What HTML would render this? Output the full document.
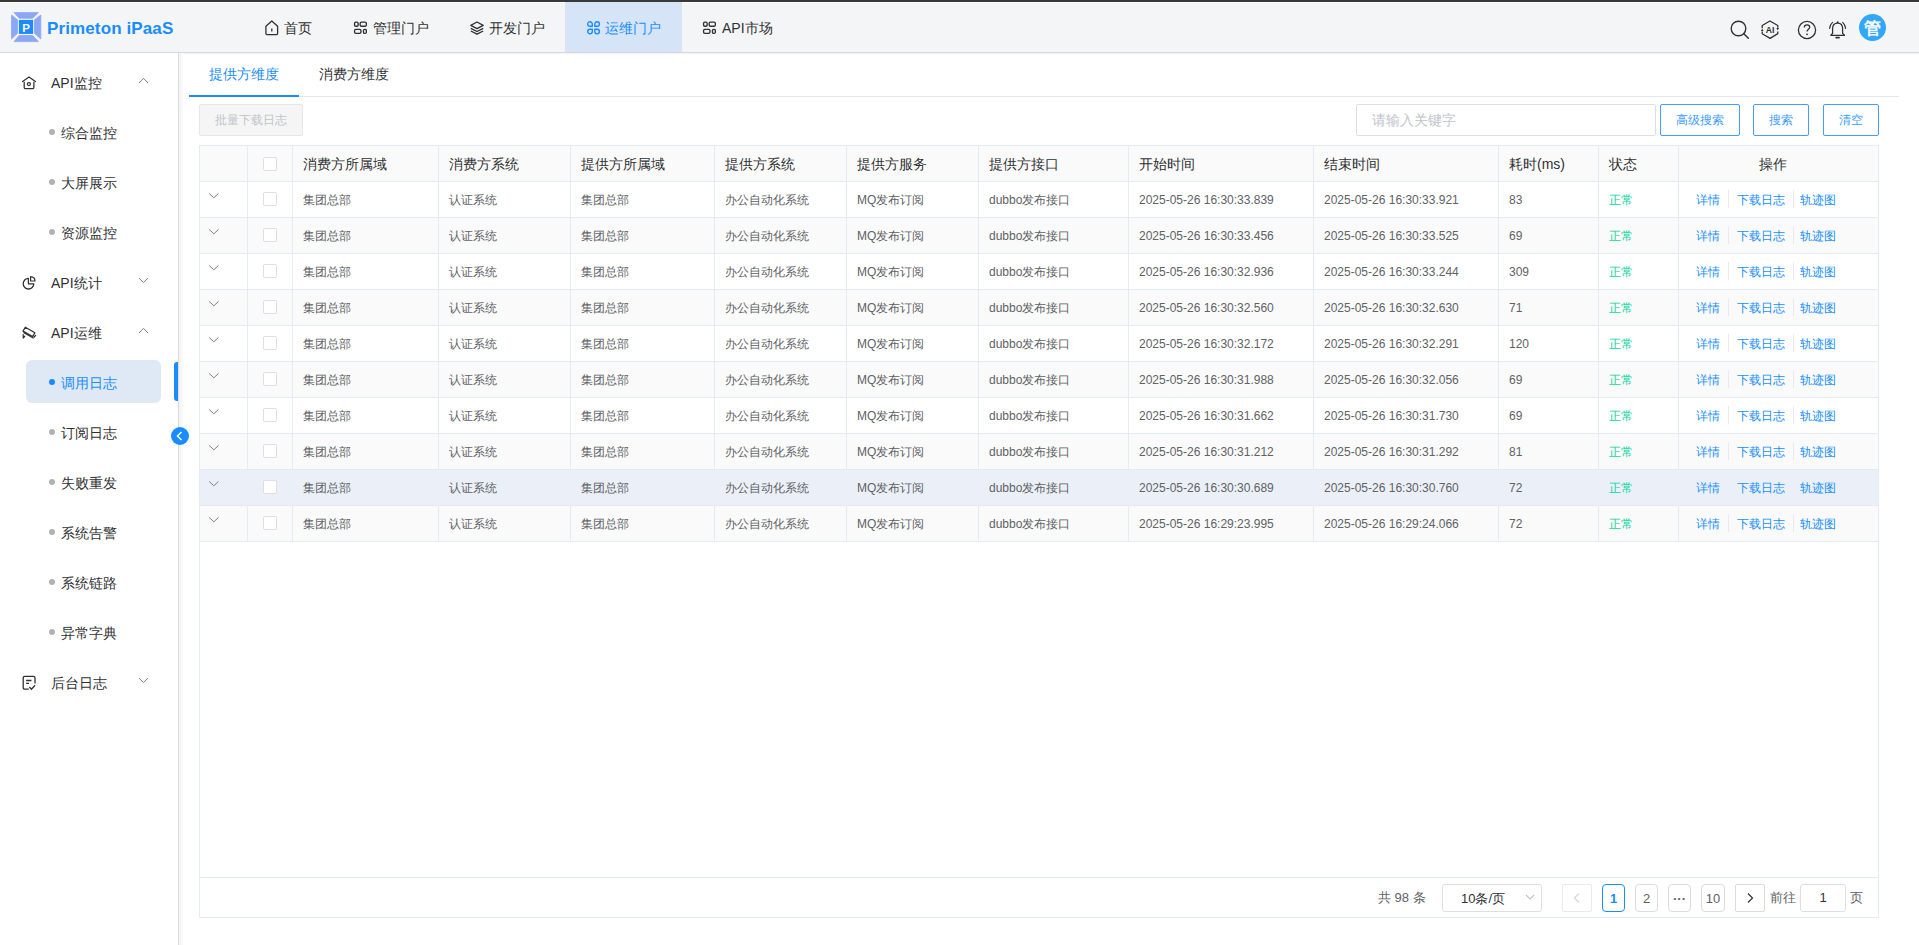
<!DOCTYPE html>
<html><head><meta charset="utf-8"><title>Primeton iPaaS</title>
<style>
*{margin:0;padding:0;box-sizing:border-box}
html,body{width:1919px;height:945px;overflow:hidden;background:#fff;font-family:"Liberation Sans",sans-serif;color:#303133;position:relative}
.a{position:absolute}
.topbar{position:absolute;left:0;top:0;width:1919px;height:2px;background:#393939}
.hdr{position:absolute;left:0;top:2px;width:1919px;height:50px;background:#f4f5f6;border-top:1px solid #fff}
.hdrline{position:absolute;left:0;top:52px;width:1919px;height:1px;background:#d9d9d9}
.hdrsh{position:absolute;left:0;top:53px;width:1919px;height:2px;background:linear-gradient(#eef0f3,#fff)}
.logo-t{position:absolute;left:47px;top:19px;font-size:17px;font-weight:bold;color:#1a8cff;letter-spacing:0.12px;white-space:nowrap}
.nav{position:absolute;top:18px;font-size:14px;color:#303133;white-space:nowrap;line-height:20px}
.navact{position:absolute;left:565px;top:2px;width:117px;height:50px;background:#d5e5f7}
.side{position:absolute;left:0;top:53px;width:178px;height:892px;background:#fff}
.sideline{position:absolute;left:178px;top:53px;width:1px;height:892px;background:#dcdcdc}
.sidesh{position:absolute;left:179px;top:53px;width:5px;height:892px;background:linear-gradient(90deg,#f2f2f2,#fff)}
.mi{position:absolute;left:51px;font-size:14px;color:#303133;white-space:nowrap;line-height:20px}
.si{position:absolute;left:61px;font-size:14px;color:#303133;white-space:nowrap;line-height:20px}
.dot{position:absolute;left:49px;width:6px;height:6px;border-radius:50%;background:#b1b1b1}
.tab{position:absolute;top:64px;font-size:14px;line-height:20px;white-space:nowrap}
.tbl{position:absolute;border:1px solid #e6eaf2}
.hl{position:absolute;left:199px;width:1680px;height:1px;background:#e6eaf2}
.vl{position:absolute;top:145px;width:1px;height:396px;background:#e6eaf2}
.th{position:absolute;top:154px;font-size:14px;line-height:20px;color:#303133;white-space:nowrap}
.td{position:absolute;font-size:12px;line-height:35px;color:#606266;white-space:nowrap}
.ok{color:#0fd3a0}
.lk{color:#1890ff}
.sep{position:absolute;width:1px;height:18px;background:#e8eaec}
.cb{position:absolute;width:14px;height:14px;border:1px solid #dcdfe6;border-radius:2px;background:#fff}
.chev{position:absolute}
.btn{position:absolute;height:32px;border:1px solid #409eff;border-radius:2px;font-size:12px;line-height:30px;text-align:center;color:#409eff;background:#fff;white-space:nowrap}
.pg{position:absolute;top:884px;height:28px;border:1px solid #dcdcdc;border-radius:4px;font-size:13px;line-height:28px;text-align:center;color:#606266;background:#fff}

</style></head><body>
<div class="topbar"></div>
<div class="hdr"></div>
<div class="navact"></div>
<div class="hdrline"></div>
<div class="a" style="left:179px;top:53px;width:1740px;height:2px;background:linear-gradient(#eef1f6,#fff)"></div>
<!-- logo -->
<svg class="a" style="left:11px;top:12px" width="31" height="31" viewBox="0 0 31 31">
 <g fill="#8ba7f6" stroke="#8ba7f6" stroke-width="0.8" stroke-linejoin="round">
 <polygon points="3,0.4 27.4,0.4 21.7,6.2 8.1,6.2"/>
 <polygon points="3,29.6 27.4,29.6 21.7,23.5 8.1,23.5"/>
 <polygon points="0.4,3 0.4,27 6.5,21.3 6.5,7.8"/>
 <polygon points="29.8,3 29.8,27 23.5,21.3 23.5,7.8"/>
 </g>
 <rect x="7.9" y="7.9" width="14.2" height="14" fill="#1a8cff"/>
 <text x="15.2" y="19.6" font-family="Liberation Sans" font-weight="bold" font-size="11.5" fill="#fff" text-anchor="middle">P</text>
</svg>
<div class="logo-t">Primeton iPaaS</div>
<!-- nav -->
<svg class="a" style="left:265px;top:20px" width="14" height="16" viewBox="0 0 14 16"><path d="M0.9 6.3 L6.8 1 L12.6 6.3 V13.6 Q12.6 14.6 11.6 14.6 H1.9 Q0.9 14.6 0.9 13.6 Z M6.8 8.4 V11.4" fill="none" stroke="#303133" stroke-width="1.3" stroke-linejoin="round"/></svg>
<div class="nav" style="left:284px">首页</div>
<svg class="a" style="left:353px;top:21px" width="14" height="14" viewBox="0 0 14 14"><g fill="none" stroke="#303133" stroke-width="1.35"><rect x="1.55" y="1.15" width="3.6" height="4.1" rx="1.3"/><rect x="7.15" y="1.15" width="6.2" height="4.1" rx="1.3"/><rect x="1.55" y="8.35" width="6.4" height="4" rx="1.3"/><rect x="10.45" y="8.35" width="2.9" height="4" rx="1.2"/></g></svg>
<div class="nav" style="left:373px">管理门户</div>
<svg class="a" style="left:470px;top:21px" width="14" height="14" viewBox="0 0 14 14"><g fill="none" stroke="#303133" stroke-width="1.35" stroke-linejoin="round"><path d="M7 1 L13.2 4.3 L7 7.6 L0.8 4.3 Z"/><path d="M0.8 7.3 L7 10.5 L13.2 7.3"/><path d="M0.8 10 L7 13.2 L13.2 10"/></g></svg>
<div class="nav" style="left:489px">开发门户</div>
<svg class="a" style="left:587px;top:21px" width="14" height="14" viewBox="0 0 14 14"><g fill="none" stroke="#1a8cff" stroke-width="1.4" stroke-linejoin="round"><path d="M5.3 3 A2.3 2.3 0 1 0 3 5.3 L5.3 5.3 Z"/><path d="M7.8 3 A2.3 2.3 0 1 1 10.1 5.3 L7.8 5.3 Z"/><path d="M5.3 10.5 A2.3 2.3 0 1 1 3 8.2 L5.3 8.2 Z"/><path d="M7.8 10.5 A2.3 2.3 0 1 0 10.1 8.2 L7.8 8.2 Z"/></g></svg>
<div class="nav" style="left:605px;color:#1a8cff">运维门户</div>
<svg class="a" style="left:702px;top:21px" width="14" height="14" viewBox="0 0 14 14"><g fill="none" stroke="#303133" stroke-width="1.35"><rect x="1.55" y="1.15" width="3.6" height="4.1" rx="1.3"/><rect x="7.15" y="1.15" width="6.2" height="4.1" rx="1.3"/><rect x="1.55" y="8.35" width="6.4" height="4" rx="1.3"/><rect x="10.45" y="8.35" width="2.9" height="4" rx="1.2"/></g></svg>
<div class="nav" style="left:722px">API市场</div>
<!-- right icons -->
<svg class="a" style="left:1730px;top:20px" width="20" height="20" viewBox="0 0 20 20"><circle cx="8.5" cy="8.5" r="7.3" fill="none" stroke="#303133" stroke-width="1.4"/><path d="M13.8 13.8 L18.3 18.3" stroke="#303133" stroke-width="1.5" stroke-linecap="round"/></svg>
<svg class="a" style="left:1756px;top:16px" width="30" height="28" viewBox="0 0 30 28"><g fill="none" stroke="#303133" stroke-width="1.3" stroke-linejoin="round"><path d="M6.2 12.2 V9.5 L13.9 5 L21.8 9.5 V11.8"/><path d="M21.8 15.6 V17.6 L14.1 22.4 L6.2 17.8 V15.6"/></g><path d="M20.3 12 H23.1 L21.7 14.3 Z M4.9 15 H7.6 L6.25 12.8 Z" fill="#303133"/><text x="14" y="16.6" font-family="Liberation Sans" font-weight="bold" font-size="8.6" fill="#303133" text-anchor="middle">AI</text></svg>
<svg class="a" style="left:1797px;top:20px" width="20" height="20" viewBox="0 0 20 20"><circle cx="10" cy="10" r="8.6" fill="none" stroke="#303133" stroke-width="1.3"/><path d="M7.3 7.6 C7.3 5.8 8.5 4.9 10 4.9 C11.6 4.9 12.7 5.9 12.7 7.3 C12.7 9.2 10 9.4 10 11.6" fill="none" stroke="#303133" stroke-width="1.3"/><circle cx="10" cy="14.3" r="0.9" fill="#303133"/></svg>
<svg class="a" style="left:1824px;top:16px" width="28" height="28" viewBox="0 0 28 28"><path d="M6.8 19.3 L8.6 17.4 V12.6 C8.6 9 10.8 7 13.6 7 C16.4 7 18.6 9 18.6 12.6 V17.4 L20.5 19.3 Z" fill="none" stroke="#303133" stroke-width="1.25" stroke-linejoin="round"/><circle cx="13.6" cy="6.3" r="1" fill="#303133"/><path d="M12.2 21.6 H15" stroke="#303133" stroke-width="1.8" stroke-linecap="round"/><path d="M5.6 12.4 C5.9 10 6.9 7.9 8.5 6.4 M21.6 12.4 C21.3 10 20.3 7.9 18.7 6.4" fill="none" stroke="#303133" stroke-width="1.15" stroke-linecap="round"/></svg>
<div class="a" style="left:1859px;top:14px;width:27px;height:27px;border-radius:50%;background:#31a7f9;color:#fff;font-size:17px;font-weight:bold;text-align:center;line-height:29px">管</div>
<!-- sidebar -->
<div class="sideline"></div>
<div class="sidesh"></div>
<svg class="a" style="left:22px;top:76px" width="14" height="14" viewBox="0 0 14 14"><path d="M0.6 5.6 L7 1.1 L13.4 5.6" fill="none" stroke="#303133" stroke-width="1.25" stroke-linejoin="round" stroke-linecap="round"/><path d="M2.2 5.8 V11.6 Q2.2 12.6 3.2 12.6 H10.9 Q11.9 12.6 11.9 11.6 V5.8" fill="none" stroke="#303133" stroke-width="1.25"/><circle cx="6.9" cy="8.1" r="1.55" fill="none" stroke="#303133" stroke-width="1.2"/></svg>
<div class="mi" style="top:73px">API监控</div>
<svg class="a" style="left:138px;top:77px" width="11" height="7" viewBox="0 0 11 7"><path d="M1 6 L5.5 1.3 L10 6" fill="none" stroke="#7d8087" stroke-width="1"/></svg>
<div class="dot" style="top:129px"></div><div class="si" style="top:123px">综合监控</div>
<div class="dot" style="top:179px"></div><div class="si" style="top:173px">大屏展示</div>
<div class="dot" style="top:229px"></div><div class="si" style="top:223px">资源监控</div>
<svg class="a" style="left:22px;top:275px" width="14" height="16" viewBox="0 0 14 16"><path d="M6.4 3.4 A5.3 5.3 0 1 0 11.8 8.8 H6.4 Z" fill="none" stroke="#303133" stroke-width="1.3" stroke-linejoin="round"/><path d="M8.6 1.6 A4.6 4.6 0 0 1 13 6 H8.6 Z" fill="none" stroke="#303133" stroke-width="1.2" stroke-linejoin="round"/></svg>
<div class="mi" style="top:273px">API统计</div>
<svg class="a" style="left:138px;top:277px" width="11" height="7" viewBox="0 0 11 7"><path d="M1 1 L5.5 5.7 L10 1" fill="none" stroke="#7d8087" stroke-width="1"/></svg>
<svg class="a" style="left:22px;top:326px" width="15" height="14" viewBox="0 0 15 14"><g fill="none" stroke="#303133" stroke-width="1.25" stroke-linejoin="round" stroke-linecap="round"><path d="M3.3 1.2 L12.9 6.7 L10.6 10.6 L1 5.1 Z"/><path d="M1.9 6.6 L11.3 12"/><path d="M1.2 8.6 L1.3 12 L2.8 10.2"/><path d="M12.2 11 L13.6 9.3"/></g></svg>
<div class="mi" style="top:323px">API运维</div>
<svg class="a" style="left:138px;top:327px" width="11" height="7" viewBox="0 0 11 7"><path d="M1 6 L5.5 1.3 L10 6" fill="none" stroke="#7d8087" stroke-width="1"/></svg>
<div class="a" style="left:26px;top:360px;width:135px;height:43px;border-radius:6px;background:#dfe9f6"></div>
<div class="a" style="left:174px;top:362px;width:4px;height:39px;border-radius:3px 0 0 3px;background:#1a8cff"></div>
<div class="dot" style="top:379px;background:#1a8cff"></div><div class="si" style="top:373px;color:#1a8cff">调用日志</div>
<div class="dot" style="top:429px"></div><div class="si" style="top:423px">订阅日志</div>
<div class="a" style="left:171px;top:427px;width:18px;height:18px;border-radius:50%;background:#1a8cff"></div>
<svg class="a" style="left:171px;top:427px" width="18" height="18" viewBox="0 0 18 18"><path d="M10.5 5 L6.5 9 L10.5 13" fill="none" stroke="#fff" stroke-width="1.5"/></svg>
<div class="dot" style="top:479px"></div><div class="si" style="top:473px">失败重发</div>
<div class="dot" style="top:529px"></div><div class="si" style="top:523px">系统告警</div>
<div class="dot" style="top:579px"></div><div class="si" style="top:573px">系统链路</div>
<div class="dot" style="top:629px"></div><div class="si" style="top:623px">异常字典</div>
<svg class="a" style="left:22px;top:675px" width="15" height="16" viewBox="0 0 15 16"><path d="M6.8 14.2 H2.8 Q1.2 14.2 1.2 12.6 V3 Q1.2 1.4 2.8 1.4 H11.4 Q13 1.4 13 3 V8.4" fill="none" stroke="#303133" stroke-width="1.3"/><path d="M4.1 5.5 H9.5 M4.1 8.4 H7 M7.4 12 L9.4 14.2 L13.1 10.2" fill="none" stroke="#303133" stroke-width="1.3"/></svg>
<div class="mi" style="top:673px">后台日志</div>
<svg class="a" style="left:138px;top:677px" width="11" height="7" viewBox="0 0 11 7"><path d="M1 1 L5.5 5.7 L10 1" fill="none" stroke="#7d8087" stroke-width="1"/></svg>
<!-- tabs -->
<div class="a" style="left:189px;top:96px;width:1710px;height:1px;background:#e4e7ed"></div>
<div class="a" style="left:189px;top:95px;width:110px;height:2px;background:#1a8cff"></div>
<div class="tab" style="left:209px;color:#1a8cff">提供方维度</div>
<div class="tab" style="left:319px;color:#303133">消费方维度</div>
<!-- toolbar -->
<div class="a" style="left:199px;top:104px;width:104px;height:32px;border:1px solid #e6e6e6;border-radius:2px;background:#f5f5f5;color:#c0c4cc;font-size:12px;line-height:30px;text-align:center">批量下载日志</div>
<div class="a" style="left:1356px;top:104px;width:300px;height:32px;border:1px solid #dcdfe6;border-radius:2px;background:#fff"></div>
<div class="a" style="left:1372px;top:110px;font-size:14px;line-height:20px;color:#c0c4cc">请输入关键字</div>
<div class="btn" style="left:1660px;top:104px;width:80px">高级搜索</div>
<div class="btn" style="left:1753px;top:104px;width:56px">搜索</div>
<div class="btn" style="left:1823px;top:104px;width:56px">清空</div>

<div class="tbl" style="left:199px;top:145px;width:1680px;height:773px"></div><div style="position:absolute;left:200px;top:146px;width:1678px;height:35px;background:#fafafa"></div><div style="position:absolute;left:200px;top:182px;width:1678px;height:35px;background:#ffffff"></div><div style="position:absolute;left:200px;top:218px;width:1678px;height:35px;background:#fafafa"></div><div style="position:absolute;left:200px;top:254px;width:1678px;height:35px;background:#ffffff"></div><div style="position:absolute;left:200px;top:290px;width:1678px;height:35px;background:#fafafa"></div><div style="position:absolute;left:200px;top:326px;width:1678px;height:35px;background:#ffffff"></div><div style="position:absolute;left:200px;top:362px;width:1678px;height:35px;background:#fafafa"></div><div style="position:absolute;left:200px;top:398px;width:1678px;height:35px;background:#ffffff"></div><div style="position:absolute;left:200px;top:434px;width:1678px;height:35px;background:#fafafa"></div><div style="position:absolute;left:200px;top:470px;width:1678px;height:35px;background:#ebf0f8"></div><div style="position:absolute;left:200px;top:506px;width:1678px;height:35px;background:#fafafa"></div><div class="hl" style="top:181px"></div><div class="hl" style="top:217px"></div><div class="hl" style="top:253px"></div><div class="hl" style="top:289px"></div><div class="hl" style="top:325px"></div><div class="hl" style="top:361px"></div><div class="hl" style="top:397px"></div><div class="hl" style="top:433px"></div><div class="hl" style="top:469px"></div><div class="hl" style="top:505px"></div><div class="hl" style="top:541px"></div><div class="vl" style="left:247px;top:145px;height:324px"></div><div class="vl" style="left:247px;top:505px;height:36px"></div><div class="vl" style="left:292px;top:145px;height:324px"></div><div class="vl" style="left:292px;top:505px;height:36px"></div><div class="vl" style="left:438px;top:145px;height:324px"></div><div class="vl" style="left:438px;top:505px;height:36px"></div><div class="vl" style="left:570px;top:145px;height:324px"></div><div class="vl" style="left:570px;top:505px;height:36px"></div><div class="vl" style="left:714px;top:145px;height:324px"></div><div class="vl" style="left:714px;top:505px;height:36px"></div><div class="vl" style="left:846px;top:145px;height:324px"></div><div class="vl" style="left:846px;top:505px;height:36px"></div><div class="vl" style="left:978px;top:145px;height:324px"></div><div class="vl" style="left:978px;top:505px;height:36px"></div><div class="vl" style="left:1128px;top:145px;height:324px"></div><div class="vl" style="left:1128px;top:505px;height:36px"></div><div class="vl" style="left:1313px;top:145px;height:324px"></div><div class="vl" style="left:1313px;top:505px;height:36px"></div><div class="vl" style="left:1498px;top:145px;height:324px"></div><div class="vl" style="left:1498px;top:505px;height:36px"></div><div class="vl" style="left:1598px;top:145px;height:324px"></div><div class="vl" style="left:1598px;top:505px;height:36px"></div><div class="vl" style="left:1678px;top:145px;height:324px"></div><div class="vl" style="left:1678px;top:505px;height:36px"></div><div class="th" style="left:303px">消费方所属域</div><div class="th" style="left:449px">消费方系统</div><div class="th" style="left:581px">提供方所属域</div><div class="th" style="left:725px">提供方系统</div><div class="th" style="left:857px">提供方服务</div><div class="th" style="left:989px">提供方接口</div><div class="th" style="left:1139px">开始时间</div><div class="th" style="left:1324px">结束时间</div><div class="th" style="left:1509px">耗时(ms)</div><div class="th" style="left:1609px">状态</div><div class="th" style="left:1759px">操作</div><div class="cb" style="left:263px;top:157px"></div><svg class="chev" style="left:208px;top:192px" width="12" height="8" viewBox="0 0 12 8"><path d="M1.2 1.5 L5.8 5.8 L10.4 1.5" fill="none" stroke="#7b7e85" stroke-width="1"/></svg><div class="cb" style="left:263px;top:192px"></div><div class="td" style="left:303px;top:183px">集团总部</div><div class="td" style="left:449px;top:183px">认证系统</div><div class="td" style="left:581px;top:183px">集团总部</div><div class="td" style="left:725px;top:183px">办公自动化系统</div><div class="td" style="left:857px;top:183px">MQ发布订阅</div><div class="td" style="left:989px;top:183px">dubbo发布接口</div><div class="td" style="left:1139px;top:183px">2025-05-26 16:30:33.839</div><div class="td" style="left:1324px;top:183px">2025-05-26 16:30:33.921</div><div class="td" style="left:1509px;top:183px">83</div><div class="td ok" style="left:1609px;top:183px">正常</div><div class="td lk" style="left:1696px;top:183px">详情</div><div class="sep" style="left:1728px;top:190px"></div><div class="td lk" style="left:1737px;top:183px">下载日志</div><div class="sep" style="left:1793px;top:190px"></div><div class="td lk" style="left:1800px;top:183px">轨迹图</div><svg class="chev" style="left:208px;top:228px" width="12" height="8" viewBox="0 0 12 8"><path d="M1.2 1.5 L5.8 5.8 L10.4 1.5" fill="none" stroke="#7b7e85" stroke-width="1"/></svg><div class="cb" style="left:263px;top:228px"></div><div class="td" style="left:303px;top:219px">集团总部</div><div class="td" style="left:449px;top:219px">认证系统</div><div class="td" style="left:581px;top:219px">集团总部</div><div class="td" style="left:725px;top:219px">办公自动化系统</div><div class="td" style="left:857px;top:219px">MQ发布订阅</div><div class="td" style="left:989px;top:219px">dubbo发布接口</div><div class="td" style="left:1139px;top:219px">2025-05-26 16:30:33.456</div><div class="td" style="left:1324px;top:219px">2025-05-26 16:30:33.525</div><div class="td" style="left:1509px;top:219px">69</div><div class="td ok" style="left:1609px;top:219px">正常</div><div class="td lk" style="left:1696px;top:219px">详情</div><div class="sep" style="left:1728px;top:226px"></div><div class="td lk" style="left:1737px;top:219px">下载日志</div><div class="sep" style="left:1793px;top:226px"></div><div class="td lk" style="left:1800px;top:219px">轨迹图</div><svg class="chev" style="left:208px;top:264px" width="12" height="8" viewBox="0 0 12 8"><path d="M1.2 1.5 L5.8 5.8 L10.4 1.5" fill="none" stroke="#7b7e85" stroke-width="1"/></svg><div class="cb" style="left:263px;top:264px"></div><div class="td" style="left:303px;top:255px">集团总部</div><div class="td" style="left:449px;top:255px">认证系统</div><div class="td" style="left:581px;top:255px">集团总部</div><div class="td" style="left:725px;top:255px">办公自动化系统</div><div class="td" style="left:857px;top:255px">MQ发布订阅</div><div class="td" style="left:989px;top:255px">dubbo发布接口</div><div class="td" style="left:1139px;top:255px">2025-05-26 16:30:32.936</div><div class="td" style="left:1324px;top:255px">2025-05-26 16:30:33.244</div><div class="td" style="left:1509px;top:255px">309</div><div class="td ok" style="left:1609px;top:255px">正常</div><div class="td lk" style="left:1696px;top:255px">详情</div><div class="sep" style="left:1728px;top:262px"></div><div class="td lk" style="left:1737px;top:255px">下载日志</div><div class="sep" style="left:1793px;top:262px"></div><div class="td lk" style="left:1800px;top:255px">轨迹图</div><svg class="chev" style="left:208px;top:300px" width="12" height="8" viewBox="0 0 12 8"><path d="M1.2 1.5 L5.8 5.8 L10.4 1.5" fill="none" stroke="#7b7e85" stroke-width="1"/></svg><div class="cb" style="left:263px;top:300px"></div><div class="td" style="left:303px;top:291px">集团总部</div><div class="td" style="left:449px;top:291px">认证系统</div><div class="td" style="left:581px;top:291px">集团总部</div><div class="td" style="left:725px;top:291px">办公自动化系统</div><div class="td" style="left:857px;top:291px">MQ发布订阅</div><div class="td" style="left:989px;top:291px">dubbo发布接口</div><div class="td" style="left:1139px;top:291px">2025-05-26 16:30:32.560</div><div class="td" style="left:1324px;top:291px">2025-05-26 16:30:32.630</div><div class="td" style="left:1509px;top:291px">71</div><div class="td ok" style="left:1609px;top:291px">正常</div><div class="td lk" style="left:1696px;top:291px">详情</div><div class="sep" style="left:1728px;top:298px"></div><div class="td lk" style="left:1737px;top:291px">下载日志</div><div class="sep" style="left:1793px;top:298px"></div><div class="td lk" style="left:1800px;top:291px">轨迹图</div><svg class="chev" style="left:208px;top:336px" width="12" height="8" viewBox="0 0 12 8"><path d="M1.2 1.5 L5.8 5.8 L10.4 1.5" fill="none" stroke="#7b7e85" stroke-width="1"/></svg><div class="cb" style="left:263px;top:336px"></div><div class="td" style="left:303px;top:327px">集团总部</div><div class="td" style="left:449px;top:327px">认证系统</div><div class="td" style="left:581px;top:327px">集团总部</div><div class="td" style="left:725px;top:327px">办公自动化系统</div><div class="td" style="left:857px;top:327px">MQ发布订阅</div><div class="td" style="left:989px;top:327px">dubbo发布接口</div><div class="td" style="left:1139px;top:327px">2025-05-26 16:30:32.172</div><div class="td" style="left:1324px;top:327px">2025-05-26 16:30:32.291</div><div class="td" style="left:1509px;top:327px">120</div><div class="td ok" style="left:1609px;top:327px">正常</div><div class="td lk" style="left:1696px;top:327px">详情</div><div class="sep" style="left:1728px;top:334px"></div><div class="td lk" style="left:1737px;top:327px">下载日志</div><div class="sep" style="left:1793px;top:334px"></div><div class="td lk" style="left:1800px;top:327px">轨迹图</div><svg class="chev" style="left:208px;top:372px" width="12" height="8" viewBox="0 0 12 8"><path d="M1.2 1.5 L5.8 5.8 L10.4 1.5" fill="none" stroke="#7b7e85" stroke-width="1"/></svg><div class="cb" style="left:263px;top:372px"></div><div class="td" style="left:303px;top:363px">集团总部</div><div class="td" style="left:449px;top:363px">认证系统</div><div class="td" style="left:581px;top:363px">集团总部</div><div class="td" style="left:725px;top:363px">办公自动化系统</div><div class="td" style="left:857px;top:363px">MQ发布订阅</div><div class="td" style="left:989px;top:363px">dubbo发布接口</div><div class="td" style="left:1139px;top:363px">2025-05-26 16:30:31.988</div><div class="td" style="left:1324px;top:363px">2025-05-26 16:30:32.056</div><div class="td" style="left:1509px;top:363px">69</div><div class="td ok" style="left:1609px;top:363px">正常</div><div class="td lk" style="left:1696px;top:363px">详情</div><div class="sep" style="left:1728px;top:370px"></div><div class="td lk" style="left:1737px;top:363px">下载日志</div><div class="sep" style="left:1793px;top:370px"></div><div class="td lk" style="left:1800px;top:363px">轨迹图</div><svg class="chev" style="left:208px;top:408px" width="12" height="8" viewBox="0 0 12 8"><path d="M1.2 1.5 L5.8 5.8 L10.4 1.5" fill="none" stroke="#7b7e85" stroke-width="1"/></svg><div class="cb" style="left:263px;top:408px"></div><div class="td" style="left:303px;top:399px">集团总部</div><div class="td" style="left:449px;top:399px">认证系统</div><div class="td" style="left:581px;top:399px">集团总部</div><div class="td" style="left:725px;top:399px">办公自动化系统</div><div class="td" style="left:857px;top:399px">MQ发布订阅</div><div class="td" style="left:989px;top:399px">dubbo发布接口</div><div class="td" style="left:1139px;top:399px">2025-05-26 16:30:31.662</div><div class="td" style="left:1324px;top:399px">2025-05-26 16:30:31.730</div><div class="td" style="left:1509px;top:399px">69</div><div class="td ok" style="left:1609px;top:399px">正常</div><div class="td lk" style="left:1696px;top:399px">详情</div><div class="sep" style="left:1728px;top:406px"></div><div class="td lk" style="left:1737px;top:399px">下载日志</div><div class="sep" style="left:1793px;top:406px"></div><div class="td lk" style="left:1800px;top:399px">轨迹图</div><svg class="chev" style="left:208px;top:444px" width="12" height="8" viewBox="0 0 12 8"><path d="M1.2 1.5 L5.8 5.8 L10.4 1.5" fill="none" stroke="#7b7e85" stroke-width="1"/></svg><div class="cb" style="left:263px;top:444px"></div><div class="td" style="left:303px;top:435px">集团总部</div><div class="td" style="left:449px;top:435px">认证系统</div><div class="td" style="left:581px;top:435px">集团总部</div><div class="td" style="left:725px;top:435px">办公自动化系统</div><div class="td" style="left:857px;top:435px">MQ发布订阅</div><div class="td" style="left:989px;top:435px">dubbo发布接口</div><div class="td" style="left:1139px;top:435px">2025-05-26 16:30:31.212</div><div class="td" style="left:1324px;top:435px">2025-05-26 16:30:31.292</div><div class="td" style="left:1509px;top:435px">81</div><div class="td ok" style="left:1609px;top:435px">正常</div><div class="td lk" style="left:1696px;top:435px">详情</div><div class="sep" style="left:1728px;top:442px"></div><div class="td lk" style="left:1737px;top:435px">下载日志</div><div class="sep" style="left:1793px;top:442px"></div><div class="td lk" style="left:1800px;top:435px">轨迹图</div><svg class="chev" style="left:208px;top:480px" width="12" height="8" viewBox="0 0 12 8"><path d="M1.2 1.5 L5.8 5.8 L10.4 1.5" fill="none" stroke="#7b7e85" stroke-width="1"/></svg><div class="cb" style="left:263px;top:480px"></div><div class="td" style="left:303px;top:471px">集团总部</div><div class="td" style="left:449px;top:471px">认证系统</div><div class="td" style="left:581px;top:471px">集团总部</div><div class="td" style="left:725px;top:471px">办公自动化系统</div><div class="td" style="left:857px;top:471px">MQ发布订阅</div><div class="td" style="left:989px;top:471px">dubbo发布接口</div><div class="td" style="left:1139px;top:471px">2025-05-26 16:30:30.689</div><div class="td" style="left:1324px;top:471px">2025-05-26 16:30:30.760</div><div class="td" style="left:1509px;top:471px">72</div><div class="td ok" style="left:1609px;top:471px">正常</div><div class="td lk" style="left:1696px;top:471px">详情</div><div class="td lk" style="left:1737px;top:471px">下载日志</div><div class="td lk" style="left:1800px;top:471px">轨迹图</div><svg class="chev" style="left:208px;top:516px" width="12" height="8" viewBox="0 0 12 8"><path d="M1.2 1.5 L5.8 5.8 L10.4 1.5" fill="none" stroke="#7b7e85" stroke-width="1"/></svg><div class="cb" style="left:263px;top:516px"></div><div class="td" style="left:303px;top:507px">集团总部</div><div class="td" style="left:449px;top:507px">认证系统</div><div class="td" style="left:581px;top:507px">集团总部</div><div class="td" style="left:725px;top:507px">办公自动化系统</div><div class="td" style="left:857px;top:507px">MQ发布订阅</div><div class="td" style="left:989px;top:507px">dubbo发布接口</div><div class="td" style="left:1139px;top:507px">2025-05-26 16:29:23.995</div><div class="td" style="left:1324px;top:507px">2025-05-26 16:29:24.066</div><div class="td" style="left:1509px;top:507px">72</div><div class="td ok" style="left:1609px;top:507px">正常</div><div class="td lk" style="left:1696px;top:507px">详情</div><div class="sep" style="left:1728px;top:514px"></div><div class="td lk" style="left:1737px;top:507px">下载日志</div><div class="sep" style="left:1793px;top:514px"></div><div class="td lk" style="left:1800px;top:507px">轨迹图</div>
<div class="a" style="left:199px;top:877px;width:1680px;height:1px;background:#e6eaf2"></div>
<div class="a" style="left:1378px;top:888px;font-size:13px;line-height:20px;color:#606266;white-space:nowrap">共 98 条</div>
<div class="a" style="left:1442px;top:884px;width:100px;height:28px;border:1px solid #dcdfe6;border-radius:3px;background:#fff"></div>
<div class="a" style="left:1461px;top:889px;font-size:13px;line-height:20px;color:#303133;white-space:nowrap">10条/页</div>
<svg class="a" style="left:1525px;top:894px" width="10" height="7" viewBox="0 0 10 7"><path d="M1 1 L5 5 L9 1" fill="none" stroke="#c0c4cc" stroke-width="1.1"/></svg>
<div class="pg" style="left:1562px;width:30px;border-radius:2px;border-color:#e6e9ef"></div>
<svg class="a" style="left:1572px;top:892px" width="10" height="12" viewBox="0 0 10 12"><path d="M7 1.5 L2.5 6 L7 10.5" fill="none" stroke="#d3d7de" stroke-width="1.2"/></svg>
<div class="pg" style="left:1602px;width:23px;border-color:#1a8cff;color:#1a8cff;font-weight:bold">1</div>
<div class="pg" style="left:1635px;width:23px">2</div>
<div class="pg" style="left:1668px;width:23px;font-weight:bold;line-height:28px">···</div>
<div class="pg" style="left:1701px;width:24px">10</div>
<div class="pg" style="left:1735px;width:30px;border-radius:2px"></div>
<svg class="a" style="left:1745px;top:892px" width="10" height="12" viewBox="0 0 10 12"><path d="M3 1.5 L7.5 6 L3 10.5" fill="none" stroke="#303133" stroke-width="1.2"/></svg>
<div class="a" style="left:1770px;top:888px;font-size:13px;line-height:20px;color:#606266">前往</div>
<div class="a" style="left:1800px;top:884px;width:46px;height:28px;border:1px solid #dcdfe6;border-radius:3px;background:#fff;font-size:13px;line-height:26px;text-align:center;color:#303133">1</div>
<div class="a" style="left:1850px;top:888px;font-size:13px;line-height:20px;color:#606266">页</div>

</body></html>
